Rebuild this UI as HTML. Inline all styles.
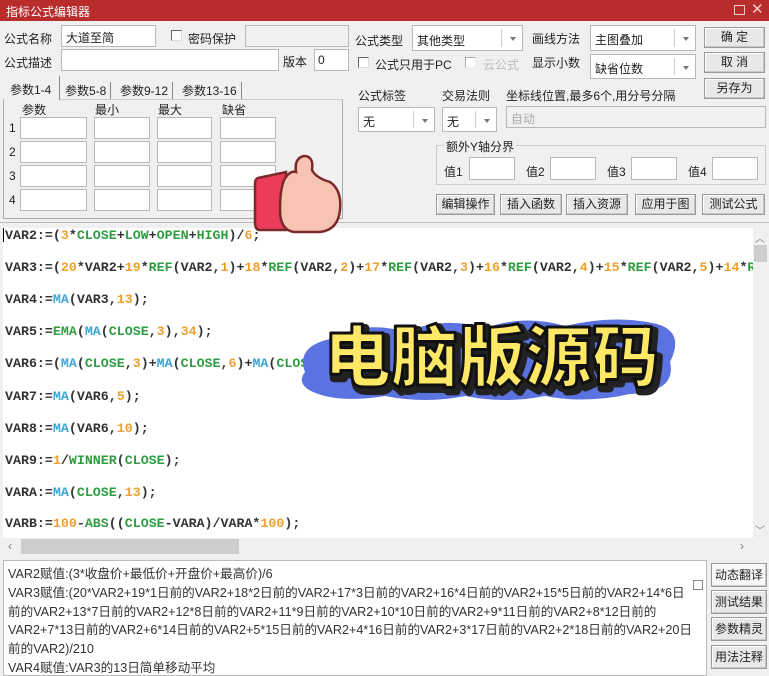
<!DOCTYPE html>
<html><head><meta charset="utf-8">
<style>
*{box-sizing:border-box;margin:0;padding:0}
body{width:769px;height:676px;overflow:hidden;background:#f0f0f0;font-family:"Liberation Sans","Noto Sans CJK SC",sans-serif;font-size:12px;color:#222;position:relative}
.a{position:absolute;white-space:nowrap}
.in{position:absolute;background:#fff;border:1px solid #b8b8b8}
.gr{background:#f0f0f0}
.btn{position:absolute;background:#e8e8e8;border:1px solid #9a9a9a;box-shadow:inset -1px -1px 0 #c8c8c8,inset 1px 1px 0 #fff;text-align:center;font-size:12px;line-height:19px}
.cb{position:absolute;width:11px;height:11px;border:1px solid #666;border-right-color:#ddd;border-bottom-color:#ddd;background:#fff}
.sel{position:absolute;background:#fff;border:1px solid #b8b8b8}
.sel:after{content:"";position:absolute;right:6px;top:50%;margin-top:-1px;border:3px solid transparent;border-top:4px solid #777}
.sel i{position:absolute;right:20px;top:3px;bottom:3px;border-left:1px solid #ccc}
.code{position:absolute;left:3px;top:228px;width:750px;height:310px;background:#fff;overflow:hidden;font-family:"Liberation Mono",monospace;font-weight:bold;font-size:13.3px;color:#333}
.code div{position:absolute;left:2px;white-space:nowrap}
.n{color:#f0a030}.g{color:#2f9e3e}.b{color:#3aa3dc}
.bt{position:absolute;left:3px;top:560px;width:704px;height:116px;background:#fff;border:1px solid #bbb;font-size:12.6px;line-height:18.8px;padding:4px 0 0 4px;color:#333;white-space:nowrap;overflow:hidden}
</style></head><body>
<div class="a" style="left:0;top:0;width:769px;height:21px;background:#b82c2c"></div>
<div class="a" style="left:6px;top:3px;color:#fff;font-size:12px">指标公式编辑器</div>
<div class="a" style="left:734px;top:5px;width:11px;height:10px;border:1px solid #f3caca"></div>
<div class="a" style="left:751px;top:0px;color:#f3caca;font-size:15px">✕</div>

<div class="a" style="left:4px;top:30px">公式名称</div>
<div class="in" style="left:61px;top:25px;width:95px;height:22px;padding:3px 4px">大道至简</div>
<div class="cb" style="left:171px;top:30px"></div>
<div class="a" style="left:188px;top:30px">密码保护</div>
<div class="in gr" style="left:245px;top:25px;width:104px;height:22px"></div>
<div class="a" style="left:4px;top:54px">公式描述</div>
<div class="in" style="left:61px;top:49px;width:218px;height:22px"></div>
<div class="a" style="left:283px;top:53px">版本</div>
<div class="in" style="left:314px;top:49px;width:35px;height:22px;padding:3px 3px">0</div>

<div class="a" style="left:3px;top:99px;width:340px;height:120px;border:1px solid #aaa;border-top-color:#ccc"></div>
<div class="a" style="left:4px;top:76px;width:56px;height:24px;background:#f0f0f0;border-right:1px solid #888"></div>
<div class="a" style="left:10px;top:81px">参数1-4</div>
<div class="a" style="left:65px;top:82px;border-right:1px solid #888;padding-right:4px">参数5-8</div>
<div class="a" style="left:120px;top:82px;border-right:1px solid #888;padding-right:4px">参数9-12</div>
<div class="a" style="left:182px;top:82px;border-right:1px solid #888;padding-right:4px">参数13-16</div>
<div class="a" style="left:22px;top:101px">参数</div>
<div class="a" style="left:95px;top:101px">最小</div>
<div class="a" style="left:158px;top:101px">最大</div>
<div class="a" style="left:222px;top:101px">缺省</div>
<div class="a" style="left:9px;top:121px">1</div><div class="a" style="left:9px;top:145px">2</div><div class="a" style="left:9px;top:169px">3</div><div class="a" style="left:9px;top:193px">4</div>
<div class="in" style="left:20px;top:117px;width:67px;height:22px"></div><div class="in" style="left:94px;top:117px;width:56px;height:22px"></div><div class="in" style="left:157px;top:117px;width:55px;height:22px"></div><div class="in" style="left:220px;top:117px;width:56px;height:22px"></div>
<div class="in" style="left:20px;top:141px;width:67px;height:22px"></div><div class="in" style="left:94px;top:141px;width:56px;height:22px"></div><div class="in" style="left:157px;top:141px;width:55px;height:22px"></div><div class="in" style="left:220px;top:141px;width:56px;height:22px"></div>
<div class="in" style="left:20px;top:165px;width:67px;height:22px"></div><div class="in" style="left:94px;top:165px;width:56px;height:22px"></div><div class="in" style="left:157px;top:165px;width:55px;height:22px"></div><div class="in" style="left:220px;top:165px;width:56px;height:22px"></div>
<div class="in" style="left:20px;top:189px;width:67px;height:22px"></div><div class="in" style="left:94px;top:189px;width:56px;height:22px"></div><div class="in" style="left:157px;top:189px;width:55px;height:22px"></div><div class="in" style="left:220px;top:189px;width:56px;height:22px"></div>

<div class="a" style="left:355px;top:32px">公式类型</div>
<div class="sel" style="left:412px;top:25px;width:111px;height:26px"><i></i><span class="a" style="left:4px;top:6px">其他类型</span></div>
<div class="a" style="left:532px;top:30px">画线方法</div>
<div class="sel" style="left:590px;top:25px;width:106px;height:26px"><i></i><span class="a" style="left:4px;top:5px">主图叠加</span></div>
<div class="btn" style="left:704px;top:27px;width:61px;height:21px">确 定</div>
<div class="cb" style="left:358px;top:57px"></div>
<div class="a" style="left:375px;top:56px">公式只用于PC</div>
<div class="cb" style="left:465px;top:57px;border-color:#aaa #eee #eee #aaa"></div>
<div class="a" style="left:483px;top:56px;color:#bbb">云公式</div>
<div class="a" style="left:532px;top:54px">显示小数</div>
<div class="sel" style="left:590px;top:54px;width:106px;height:25px"><i></i><span class="a" style="left:4px;top:5px">缺省位数</span></div>
<div class="btn" style="left:704px;top:52px;width:61px;height:21px">取 消</div>
<div class="btn" style="left:704px;top:78px;width:61px;height:21px">另存为</div>
<div class="a" style="left:358px;top:87px">公式标签</div>
<div class="a" style="left:442px;top:87px">交易法则</div>
<div class="a" style="left:506px;top:87px">坐标线位置,最多6个,用分号分隔</div>
<div class="sel" style="left:358px;top:107px;width:77px;height:25px"><i></i><span class="a" style="left:4px;top:5px">无</span></div>
<div class="sel" style="left:442px;top:107px;width:55px;height:25px"><i></i><span class="a" style="left:4px;top:5px">无</span></div>
<div class="in gr" style="left:506px;top:106px;width:260px;height:22px;color:#aaa;padding:3px 4px">自动</div>
<div class="a" style="left:436px;top:145px;width:330px;height:40px;border:1px solid #ccc"></div>
<div class="a" style="left:444px;top:138px;background:#f0f0f0;padding:0 2px">额外Y轴分界</div>
<div class="a" style="left:444px;top:163px">值1</div><div class="in" style="left:469px;top:157px;width:46px;height:23px"></div>
<div class="a" style="left:526px;top:163px">值2</div><div class="in" style="left:550px;top:157px;width:46px;height:23px"></div>
<div class="a" style="left:607px;top:163px">值3</div><div class="in" style="left:631px;top:157px;width:46px;height:23px"></div>
<div class="a" style="left:688px;top:163px">值4</div><div class="in" style="left:712px;top:157px;width:46px;height:23px"></div>
<div class="btn" style="left:436px;top:194px;width:59px;height:21px">编辑操作</div>
<div class="btn" style="left:500px;top:194px;width:62px;height:21px">插入函数</div>
<div class="btn" style="left:566px;top:194px;width:62px;height:21px">插入资源</div>
<div class="btn" style="left:635px;top:194px;width:61px;height:21px">应用于图</div>
<div class="btn" style="left:702px;top:194px;width:63px;height:21px">测试公式</div>

<div class="a" style="left:0;top:222px;width:769px;height:334px;border-top:1px solid #bbb"></div>
<div class="code">
<div style="top:0px">VAR2:=(<span class="n">3</span>*<span class="g">CLOSE</span>+<span class="g">LOW</span>+<span class="g">OPEN</span>+<span class="g">HIGH</span>)/<span class="n">6</span>;</div>
<div style="top:32px">VAR3:=(<span class="n">20</span>*VAR2+<span class="n">19</span>*<span class="g">REF</span>(VAR2,<span class="n">1</span>)+<span class="n">18</span>*<span class="g">REF</span>(VAR2,<span class="n">2</span>)+<span class="n">17</span>*<span class="g">REF</span>(VAR2,<span class="n">3</span>)+<span class="n">16</span>*<span class="g">REF</span>(VAR2,<span class="n">4</span>)+<span class="n">15</span>*<span class="g">REF</span>(VAR2,<span class="n">5</span>)+<span class="n">14</span>*<span class="g">REF</span></div>
<div style="top:64px">VAR4:=<span class="b">MA</span>(VAR3,<span class="n">13</span>);</div>
<div style="top:96px">VAR5:=<span class="g">EMA</span>(<span class="b">MA</span>(<span class="g">CLOSE</span>,<span class="n">3</span>),<span class="n">34</span>);</div>
<div style="top:128px">VAR6:=(<span class="b">MA</span>(<span class="g">CLOSE</span>,<span class="n">3</span>)+<span class="b">MA</span>(<span class="g">CLOSE</span>,<span class="n">6</span>)+<span class="b">MA</span>(<span class="g">CLOSE</span>,<span class="n">12</span>)</div>
<div style="top:161px">VAR7:=<span class="b">MA</span>(VAR6,<span class="n">5</span>);</div>
<div style="top:193px">VAR8:=<span class="b">MA</span>(VAR6,<span class="n">10</span>);</div>
<div style="top:225px">VAR9:=<span class="n">1</span>/<span class="g">WINNER</span>(<span class="g">CLOSE</span>);</div>
<div style="top:257px">VARA:=<span class="b">MA</span>(<span class="g">CLOSE</span>,<span class="n">13</span>);</div>
<div style="top:288px">VARB:=<span class="n">100</span>-<span class="g">ABS</span>((<span class="g">CLOSE</span>-VARA)/VARA*<span class="n">100</span>);</div>
</div>
<div class="a" style="left:3px;top:228px;width:1px;height:14px;background:#000"></div>
<div class="a" style="left:753px;top:228px;width:15px;height:310px;background:#f0f0f0"></div>
<div class="a" style="left:755px;top:230px;color:#777;font-size:10px">︿</div>
<div class="a" style="left:754px;top:245px;width:13px;height:17px;background:#cdcdcd"></div>
<div class="a" style="left:755px;top:522px;color:#777;font-size:10px">﹀</div>
<div class="a" style="left:3px;top:538px;width:750px;height:17px;background:#f0f0f0"></div>
<div class="a" style="left:8px;top:539px;color:#777;font-size:12px">‹</div>
<div class="a" style="left:21px;top:539px;width:218px;height:15px;background:#cdcdcd"></div>
<div class="a" style="left:740px;top:539px;color:#777;font-size:12px">›</div>

<div class="bt">VAR2赋值:(3*收盘价+最低价+开盘价+最高价)/6<br>VAR3赋值:(20*VAR2+19*1日前的VAR2+18*2日前的VAR2+17*3日前的VAR2+16*4日前的VAR2+15*5日前的VAR2+14*6日<br>前的VAR2+13*7日前的VAR2+12*8日前的VAR2+11*9日前的VAR2+10*10日前的VAR2+9*11日前的VAR2+8*12日前的<br>VAR2+7*13日前的VAR2+6*14日前的VAR2+5*15日前的VAR2+4*16日前的VAR2+3*17日前的VAR2+2*18日前的VAR2+20日<br>前的VAR2)/210<br>VAR4赋值:VAR3的13日简单移动平均</div>
<div class="a" style="left:693px;top:580px;width:10px;height:10px;border:1px solid #888;background:#fff"></div>
<div class="btn" style="left:711px;top:563px;width:56px;height:24px;line-height:22px;background:#f8f8f8">动态翻译</div>
<div class="btn" style="left:711px;top:590px;width:56px;height:24px;line-height:22px">测试结果</div>
<div class="btn" style="left:711px;top:617px;width:56px;height:24px;line-height:22px">参数精灵</div>
<div class="btn" style="left:711px;top:645px;width:56px;height:24px;line-height:22px">用法注释</div>

<svg class="a" style="left:250px;top:150px" width="100" height="85" viewBox="0 0 100 85">
<path d="M8 28 L36 22 L36 80 L10 80 Q5 80 5 72 L5 34 Q5 29 8 28Z" fill="#ec3c5a" stroke="#7a2a2a" stroke-width="2.5"/>
<path d="M34 30 Q40 20 46 22 Q44 8 54 6 Q64 6 62 20 Q66 28 80 32 Q92 40 90 60 Q88 80 70 82 L44 82 Q30 80 30 60 Q30 40 34 30Z" fill="#f7c3b2" stroke="#7a2a2a" stroke-width="2.5"/>
</svg>

<svg class="a" style="left:295px;top:310px" width="390" height="96" viewBox="0 0 390 96">
<path d="M10 62 Q0 35 40 28 Q70 10 110 22 Q150 6 190 18 Q230 4 270 16 Q320 4 362 14 Q390 22 375 52 Q382 82 335 84 Q290 94 250 86 Q210 94 170 86 Q130 94 90 86 Q40 94 14 80 Q2 72 10 62Z" fill="#5b73e0"/>
<text x="32" y="75" font-family="'Noto Sans CJK SC',sans-serif" font-weight="900" font-size="67" fill="#222" stroke="#222" stroke-width="8" stroke-linejoin="round">电脑版源码</text>
<text x="29" y="71" font-family="'Noto Sans CJK SC',sans-serif" font-weight="900" font-size="67" fill="#ffe866" stroke="#111" stroke-width="3" stroke-linejoin="round">电脑版源码</text>
</svg>
</body></html>
